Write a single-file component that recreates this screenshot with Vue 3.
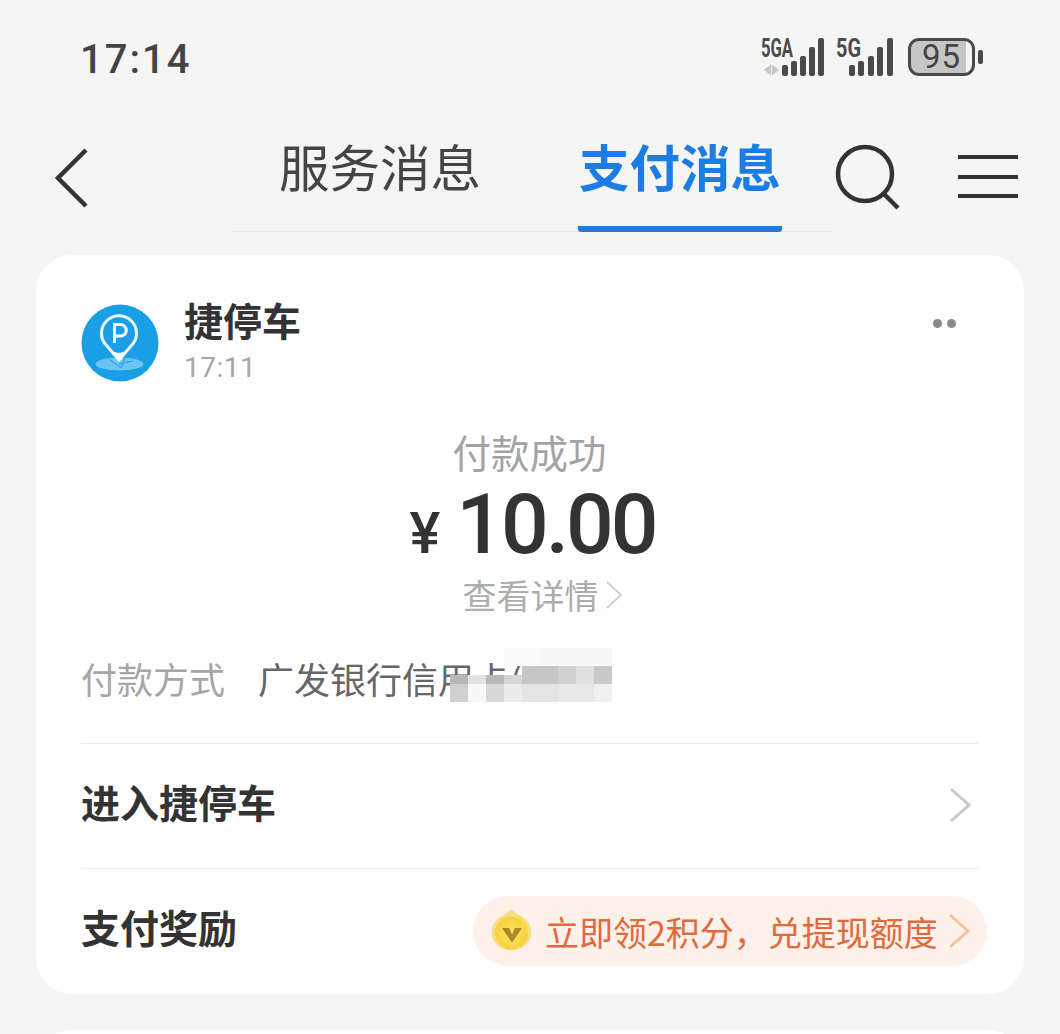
<template>
  <div class="page">
    <div class="statusbar">
      <span class="clock">17:14</span>
      <div class="status-icons">
        <svg class="sig" width="64" height="40" viewBox="0 0 64 40">
          <text x="0" y="20" class="sig-label" textLength="32" lengthAdjust="spacingAndGlyphs">5GA</text>
          <path d="M3 33l7-5.500v11zM11 27.500l7 5.500-7 5.500z" fill="#c6c6c6" />
          <rect x="21" y="28" width="6" height="11" rx="2" fill="#4a4a4a" />
          <rect x="30" y="24" width="6" height="15" rx="2" fill="#4a4a4a" />
          <rect x="39" y="19" width="6" height="20" rx="2" fill="#4a4a4a" />
          <rect x="48" y="10" width="6" height="29" rx="2" fill="#4a4a4a" />
          <rect x="57" y="1" width="6" height="38" rx="2" fill="#4a4a4a" />
        </svg>
        <svg class="sig" width="57" height="40" viewBox="0 0 57 40">
          <text x="0" y="20" class="sig-label" textLength="25" lengthAdjust="spacingAndGlyphs">5G</text>
          <rect x="13" y="28" width="6" height="11" rx="2" fill="#4a4a4a" />
          <rect x="22" y="24" width="6" height="15" rx="2" fill="#4a4a4a" />
          <rect x="32" y="19" width="6" height="20" rx="2" fill="#4a4a4a" />
          <rect x="41" y="10" width="6" height="29" rx="2" fill="#4a4a4a" />
          <rect x="51" y="1" width="6" height="38" rx="2" fill="#4a4a4a" />
        </svg>
        <div class="battery">
          <div class="battery-body"><span>95</span></div>
          <div class="battery-tip"></div>
        </div>
      </div>
    </div>

    <div class="nav">
      <svg class="back" width="36" height="60" viewBox="0 0 36 60">
        <path d="M32 2L4 30l28 28" fill="none" stroke="#333" stroke-width="4.500" />
      </svg>
      <div class="tabs">
        <div class="tab">服务消息</div>
        <div class="tab active">支付消息</div>
      </div>
      <svg class="search" width="66" height="66" viewBox="0 0 66 66">
        <circle cx="31" cy="30" r="27" fill="none" stroke="#333" stroke-width="4.500" />
        <path d="M50 50l14 14" fill="none" stroke="#333" stroke-width="4.500" />
      </svg>
      <div class="menu"><i></i><i></i><i></i></div>
    </div>

    <div class="card">
      <div class="head">
        <svg class="logo" width="78" height="78" viewBox="0 0 78 78">
          <circle cx="39" cy="39" r="38.500" fill="#1a9fe6" />
          <ellipse cx="38.500" cy="60" rx="24" ry="6.500" fill="#6cc4f0" />
          <path d="M28 55l12 9M44 54l-4 10M52 57l-14 3" fill="none" stroke="#1a9fe6" stroke-width="1" />
          <path d="M38 56L26 42a17.500 17.500 0 1 1 24 0z" fill="#1a9fe6" stroke="#eaf8ff" stroke-width="3" stroke-linejoin="round" />
          <path d="M38 58L29 46q9 6 18 0z" fill="#fff" />
          <path d="M33.500 39V20.500h6a5.800 5.800 0 0 1 0 11.600h-6" fill="none" stroke="#fff" stroke-width="3" />
        </svg>
        <div class="head-text">
          <div class="name">捷停车</div>
          <div class="time">17:11</div>
        </div>
        <div class="dots"><i></i><i></i></div>
      </div>

      <div class="amount-block">
        <div class="pay-title">付款成功</div>
        <div class="amount"><span class="yen">¥</span>10.00</div>
        <div class="detail">
          查看详情
          <svg width="18" height="30" viewBox="0 0 18 30">
            <path d="M2 2l14 13L2 28" fill="none" stroke="#d0d0d0" stroke-width="2" />
          </svg>
        </div>
      </div>

      <div class="method">
        <span class="method-label">付款方式</span>
        <span class="method-value">广发银行信用卡(</span>
        <div class="mosaic">
          <i v-for="(c, i) in mosaicCells" :key="i" :style="{ background: c }"></i>
        </div>
      </div>

      <div class="row row-enter">
        <span class="row-title">进入捷停车</span>
        <svg class="chev" width="24" height="36" viewBox="0 0 24 36">
          <path d="M3 2l18 16L3 34" fill="none" stroke="#c8c8c8" stroke-width="3" />
        </svg>
      </div>

      <div class="row">
        <span class="row-title">支付奖励</span>
        <div class="pill">
          <svg class="coin" width="41" height="42" viewBox="0 0 41 42">
            <defs>
              <radialGradient id="coinFill" cx="50%" cy="50%" r="50%">
                <stop offset="0%" stop-color="#fbe05c" />
                <stop offset="100%" stop-color="#f8d23f" />
              </radialGradient>
            </defs>
            <path d="M20.500 0C23 4 30 6 34 10A20 18 0 1 1 7 10C11 6 18 4 20.500 0z" fill="#f7dd85" />
            <circle cx="20.500" cy="24" r="16.500" fill="url(#coinFill)" />
            <path d="M11 19h7l3 6.500 3-6.500h7l-9.500 14h-1z" fill="#a98a2a" />
          </svg>
          <span class="pill-text">立即领2积分，兑提现额度</span>
          <svg class="pill-chev" width="24" height="36" viewBox="0 0 24 36">
            <path d="M3 2l18 16L3 34" fill="none" stroke="#f3c0a5" stroke-width="3" />
          </svg>
        </div>
      </div>
    </div>

    <div class="card next"></div>
  </div>
</template>

<script setup>
const half = (c) => `linear-gradient(transparent 50%, ${c} 50%)`

const mosaicCells = [
  'transparent', 'transparent', 'transparent', '#fbfbfb', '#fcfcfc', '#f9f9f9', '#f9f9f9', '#f9f9f9', '#f9f9f9',
  half('#b8b8b8'), half('#e2e2e2'), half('#b8b8b8'), half('#d6d6d6'), '#c6c6c6', '#c6c6c6', '#d0d0d0', '#e0e0e0', '#c9c9c9',
  '#d0d0d0', '#f8f8f8', '#d8d8d8', '#ececec', '#e4e4e4', '#e4e4e4', '#e8e8e8', '#e8e8e8', '#f0f0f0',
]
</script>

<style>
html, body {
  margin: 0;
  background: #f5f5f5;
}
</style>

<style scoped>
.page {
  width: 1060px;
  height: 1034px;
  overflow: hidden;
  background: #f5f5f5;
  font-family: "Noto Sans CJK SC", "Roboto", sans-serif;
  color: #333;
}

.statusbar {
  height: 120px;
  padding: 36px 77px 0 80px;
  box-sizing: border-box;
  display: flex;
  justify-content: space-between;
  align-items: flex-start;
}

.clock {
  font-family: "Roboto", sans-serif;
  font-size: 40px;
  line-height: 46px;
  font-weight: 500;
  letter-spacing: 2px;
  color: #444;
  margin-top: 1px;
}

.status-icons {
  display: flex;
  align-items: center;
  gap: 11px;
  height: 44px;
  margin-top: -1px;
}

.sig {
  overflow: visible;
}

.sig-label {
  font-family: "Roboto", sans-serif;
  font-size: 25px;
  font-weight: 700;
  fill: #4a4a4a;
}

.battery {
  display: flex;
  align-items: center;
  gap: 3px;
  margin-left: 4px;
}

.battery-body {
  width: 67px;
  height: 38px;
  box-sizing: border-box;
  border: 3px solid #4a4a4a;
  border-radius: 11px;
  background: linear-gradient(90deg, #c6c6c6 90%, #f5f5f5 90%);
  display: flex;
  align-items: center;
  justify-content: center;
}

.battery-body span {
  font-family: "Roboto", sans-serif;
  font-size: 33px;
  line-height: 32px;
  letter-spacing: 1px;
  color: #444;
}

.battery-tip {
  width: 5px;
  height: 14px;
  border-radius: 2px;
  background: #4a4a4a;
}

.nav {
  height: 135px;
  display: flex;
  align-items: flex-start;
}

.back {
  margin: 28px 0 0 54px;
}

.tabs {
  width: 600px;
  height: 112px;
  margin-left: 142px;
  box-sizing: border-box;
  border-bottom: 1px solid #ececec;
  display: flex;
  gap: 96px;
  padding-left: 46px;
}

.tab {
  width: 204px;
  text-align: center;
  font-size: 50.500px;
  line-height: 90px;
  height: 112px;
  box-sizing: border-box;
  color: #444;
}

.tab.active {
  color: #1b7ce6;
  font-weight: 700;
  border-bottom: 6px solid #1b7ce6;
  border-radius: 0 0 3px 3px;
}

.search {
  margin: 24px 0 0 2px;
}

.menu {
  margin: 35px 0 0 58px;
  width: 60px;
  height: 43px;
  display: flex;
  flex-direction: column;
  justify-content: space-between;
}

.menu i {
  display: block;
  height: 4px;
  background: #333;
}

.card {
  margin: 0 36px;
  background: #fff;
  border-radius: 36px;
  box-sizing: border-box;
  height: 739px;
  padding: 0 46px 0 45px;
}

.card.next {
  margin-top: 36px;
}

.head {
  display: flex;
  padding-top: 49px;
}

.logo {
  flex: none;
}

.head-text {
  margin-left: 25px;
  margin-top: -8px;
}

.name {
  font-size: 39px;
  line-height: 46px;
  font-weight: 700;
  color: #333;
}

.time {
  font-family: "Roboto", sans-serif;
  font-size: 28px;
  line-height: 36px;
  margin-top: 8px;
  color: #a6a6a6;
  letter-spacing: 0.500px;
}

.dots {
  margin-left: auto;
  margin-right: 22px;
  margin-top: 15px;
  display: flex;
  gap: 5px;
}

.dots i {
  width: 9px;
  height: 9px;
  border-radius: 50%;
  background: #8a8a8a;
}

.amount-block {
  margin-top: 40px;
  text-align: center;
}

.pay-title {
  font-size: 38.500px;
  line-height: 50px;
  color: #a3a3a3;
}

.amount {
  font-family: "Roboto", sans-serif;
  font-size: 84px;
  line-height: 80px;
  font-weight: 500;
  letter-spacing: -3px;
  color: #333;
  margin-top: 9px;
  padding-left: 6px;
}

.yen {
  font-size: 58px;
  letter-spacing: 0;
  margin-right: 16px;
}

.detail {
  font-size: 34px;
  line-height: 44px;
  color: #adadad;
  display: flex;
  justify-content: center;
  align-items: center;
  padding-left: 26px;
}

.detail svg {
  margin-left: 6px;
}

.method {
  position: relative;
  display: flex;
  align-items: center;
  height: 66px;
  margin-top: 28px;
  font-size: 36px;
}

.method-label {
  color: #a6a6a6;
}

.method-value {
  margin-left: 33px;
  color: #666;
}

.mosaic {
  position: absolute;
  left: 369px;
  top: 3px;
  width: 162px;
  height: 54px;
  display: grid;
  grid-template-columns: repeat(9, 1fr);
  grid-template-rows: repeat(3, 1fr);
}

.row {
  display: flex;
  justify-content: space-between;
  align-items: center;
  border-top: 1px solid #ececec;
  height: 124px;
}

.row-enter {
  margin-top: 32px;
  padding-right: 6px;
}

.row-title {
  font-size: 39px;
  font-weight: 700;
  color: #333;
  margin-bottom: 10px;
}

.chev {
  margin-bottom: 3px;
}

.pill {
  display: flex;
  align-items: center;
  height: 70px;
  width: 514px;
  flex: none;
  box-sizing: border-box;
  padding-left: 18px;
  border-radius: 35px;
  background: #fdf1ea;
  margin: 0 -9px 0 0;
}

.coin {
  flex: none;
  margin-top: -2px;
}

.pill-text {
  margin-left: 13px;
  font-size: 34px;
  color: #e2693a;
  white-space: nowrap;
}

.pill-chev {
  margin-left: 9px;
}
</style>
